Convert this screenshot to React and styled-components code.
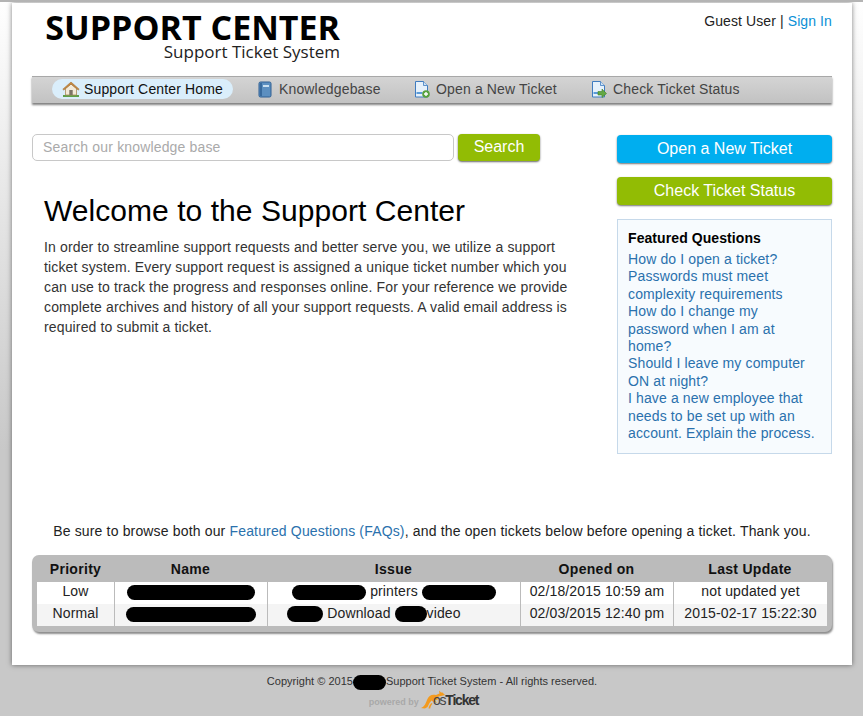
import React from "react";
import styled, { createGlobalStyle } from "styled-components";

const Global = createGlobalStyle`
  html, body { margin: 0; padding: 0; height: 716px; overflow: hidden; }
  body {
    background: linear-gradient(to bottom, #ffffff 0, #c8c8c8 450px, #c8c8c8 100%);
    font-family: "Liberation Sans", Arial, sans-serif;
    font-size: 14px;
    color: #000;
    border-top: 2px solid #b4b4b4;
    box-sizing: border-box;
  }
`;
const Page = styled.div`
  display: flex; flex-direction: column; align-items: center; padding-left: 1px;
`;
const Container = styled.div`
  box-sizing: border-box;
  margin-top: 1px;
  width: 840px; height: 662px;
  background: #fff;
  box-shadow: 0 0 5px rgba(0,0,0,.5);
  padding: 0 20px;
  display: flex; flex-direction: column;
`;
const Header = styled.header`
  display: flex; justify-content: space-between; align-items: flex-start;
  height: 73px; padding-left: 13px;
`;
const Logo = styled.div`
  display: flex; flex-direction: column; align-items: flex-end;
  font-family: "Open Sans", sans-serif; color: #000; width: 295px; padding-top: 8px;
`;
const LogoMain = styled.div`
  font-size: 34px; font-weight: 700; line-height: 32px; white-space: nowrap;
`;
const LogoSub = styled.div`
  font-size: 17px; line-height: 18px; color: #222; margin-top: 0; white-space: nowrap;
`;
const UserBar = styled.div`
  padding-top: 10px; font-size: 14px; line-height: 17px; color: #222; letter-spacing: .1px;
`;
const Link = styled.a`
  color: ${p => p.$c || "#0a8fd6"}; text-decoration: none;
`;
const Nav = styled.nav`
  box-sizing: border-box;
  height: 27px;
  border-top: 1px solid #a8a8a8;
  background: linear-gradient(to bottom, #d4d4d4, #c2c2c2);
  box-shadow: 0 2px 2px rgba(0,0,0,.5);
  display: flex; align-items: flex-start;
  padding: 2px 0 0 20px;
`;
const NavItem = styled.a`
  display: flex; align-items: center; gap: ${p => p.$gap}px;
  height: 20px; box-sizing: border-box;
  width: ${p => p.$w}px;
  padding-left: 10px;
  border-radius: 10px;
  margin-right: ${p => p.$mr || 0}px;
  background: ${p => p.$active ? "#daeefb" : "transparent"};
  color: ${p => p.$active ? "#111" : "#444"};
  font-size: 14px; white-space: nowrap; letter-spacing: .15px;
`;
const Main = styled.div`
  display: flex; justify-content: space-between; height: 387px; margin-top: 31px;
`;
const LeftCol = styled.div`
  width: 540px;
`;
const SearchRow = styled.form`
  display: flex; gap: 4px; height: 27px; margin: 0;
`;
const SearchInput = styled.div`
  box-sizing: border-box; width: 422px; height: 27px;
  border: 1px solid #c8c8c8; border-radius: 5px; background: #fff;
  color: #aaa; font-size: 14px; line-height: 25px; padding-left: 10px; letter-spacing: .16px;
`;
const SearchButton = styled.div`
  width: 82px; height: 27px; border-radius: 4px; background: #92bc04;
  box-shadow: 0 1px 2px rgba(0,0,0,.6);
  color: #fff; font-size: 16px; line-height: 26px; text-align: center;
`;
const Welcome = styled.div`
  padding: 33px 0 0 12px;
`;
const H1 = styled.h1`
  margin: 0 0 9px; font-size: 30px; font-weight: 400; line-height: 34px; color: #000; letter-spacing: .05px;
`;
const Para = styled.p`
  margin: 0; font-size: 14px; line-height: 20px; color: #333; width: 530px; letter-spacing: .14px;
`;
const Side = styled.aside`
  width: 215px; padding-top: 1px; display: flex; flex-direction: column;
`;
const CTA = styled.div`
  height: 28px; border-radius: 4px; background: ${p => p.$bg};
  box-shadow: 0 1px 2px rgba(0,0,0,.55);
  color: #fff; font-size: 16px; line-height: 27px; text-align: center;
  margin-bottom: 14px;
`;
const FAQ = styled.div`
  box-sizing: border-box; height: 235px;
  background: #f7fbfe; border: 1px solid #c6d9ea;
  padding: 10px 10px 0;
  font-size: 14px; line-height: 17.4px;
`;
const FAQTitle = styled.div`
  font-weight: 700; color: #000; margin-bottom: 4px; letter-spacing: .08px; line-height: 17px;
`;
const FAQLink = styled.a`
  display: block; color: #2a71ad; letter-spacing: .13px;
`;
const Notice = styled.p`
  margin: 0; text-align: center; font-size: 14px; line-height: 20px; color: #222; height: 20px;
  letter-spacing: .16px;
`;
const TableWrap = styled.div`
  margin-top: 14px; height: 77px; box-sizing: border-box;
  background: #bbb; border-radius: 7px; padding: 0 5px 6px;
  box-shadow: 1px 2px 2px rgba(0,0,0,.45);
`;
const Table = styled.table`
  border-collapse: separate; border-spacing: 0; table-layout: fixed; width: 790px; height: 71px;
  font-size: 14px; text-align: center; color: #222; letter-spacing: .12px;
`;
const Th = styled.th`
  height: 27px; padding: 0; font-size: 14px; font-weight: 700; color: #111; letter-spacing: .3px;
  width: ${p => p.$w}px;
`;
const Td = styled.td`
  box-sizing: border-box;
  height: 22px; padding: 0 0 4px; white-space: nowrap;
  border-left: ${p => p.$first ? "none" : "1px solid #bbb"};
  background: ${p => p.$alt ? "#f4f4f4" : "#fff"};
  line-height: 18px;
`;
const Shifted = styled.span`
  display: inline-block; margin-right: 40px;
`;
const Redact = styled.span`
  display: inline-block; vertical-align: middle; width: ${p => p.$w}px; height: ${p => p.$h || 15}px;
  background: #000; border-radius: 10px;
`;
const Footer = styled.footer`
  text-align: center; padding-top: 8px; font-size: 11px; line-height: 16px; color: #333; letter-spacing: .02px;
`;
const Powered = styled.div`
  display: flex; justify-content: center; align-items: flex-end; height: 19px; padding-right: 17px;
`;
const PoweredBy = styled.span`
  color: #a9a9a9; font-size: 9px; font-weight: 700; line-height: 14px; margin-right: 1px;
`;
const OsText = styled.span`
  font-size: 14px; font-weight: 700; line-height: 15px; color: #333; letter-spacing: -1.2px;
  margin-left: -13px; margin-bottom: 1px;
`;
const OsThin = styled.span`
  font-weight: 400; color: #444;
`;

const House = () => (
  <svg width="18" height="16" viewBox="0 0 18 16">
    <path d="M1 15h16" stroke="#5ea04a" strokeWidth="2" />
    <path d="M3.500 7.500V14h11V7.500L9 3z" fill="#f3ead8" stroke="#a98a5c" strokeWidth=".8" />
    <path d="M.8 8.200 9 1l8.200 7.200-1 .9L9 3 1.800 9.100z" fill="#c98a3e" stroke="#98642a" strokeWidth=".5" />
    <rect x="7.300" y="9" width="3.400" height="5" fill="#7d7468" />
  </svg>
);
const Book = () => (
  <svg width="16" height="17" viewBox="0 0 16 17">
    <rect x="2" y="1" width="12" height="15" rx="1.500" fill="#5c8fc0" stroke="#2f5f93" />
    <rect x="3" y="2" width="2" height="13" fill="#386a9d" />
    <rect x="6" y="4" width="6" height="2" fill="#c9dff0" />
  </svg>
);
const Doc = ({ kind }) => (
  <svg width="16" height="17" viewBox="0 0 16 17">
    <path d="M1.500.5h8l4 4v11.500h-12z" fill="#e6f1fb" stroke="#3f7cc0" />
    <path d="M9.500.5v4h4" fill="#cfe2f4" stroke="#3f7cc0" strokeWidth=".8" />
    <rect x="2.500" y="11" width="6" height="2" fill="#5b9bd8" />
    {kind === "plus" ? (
      <>
        <circle cx="12" cy="13" r="3.800" fill="#58a23e" />
        <path d="M12 11v4M10 13h4" stroke="#fff" strokeWidth="1.400" />
      </>
    ) : (
      <path d="M7 10.500h4V8l4.500 4.500L11 16.500V14H7z" fill="#63a844" stroke="#3f7f2a" strokeWidth=".6" />
    )}
  </svg>
);
const Kangaroo = () => (
  <svg width="26" height="20" viewBox="0 0 26 20">
    <path d="M0.500 19C4 18.500 5.500 15 7 11 8.500 6.500 12 5 16 6L19.500 4.500 19 1.500 21 3.500 22.500 3.500 25 6 21 7 18.500 7.500 17.500 10.500 15 11.500 17 14 13.500 13 11.500 11.500 9.500 14 7.500 18 5 19.500z" fill="#f39a1e" />
    <path d="M8.500 19.500c.3-2 1.500-4 2.800-5.500l1.200.8c-1.300 1.300-2 3-2.300 4.700z" fill="#f39a1e" />
  </svg>
);

const Row = ({ alt, cells }) => (
  <tr>
    {cells.map((c, i) => (
      <Td key={i} $alt={alt} $first={i === 0}>{c}</Td>
    ))}
  </tr>
);

export default function App() {
  return (
    <Page>
      <Global />
      <Container>
        <Header>
          <Logo>
            <LogoMain>SUPPORT CENTER</LogoMain>
            <LogoSub>Support Ticket System</LogoSub>
          </Logo>
          <UserBar>Guest User | <Link>Sign In</Link></UserBar>
        </Header>
        <Nav>
          <NavItem $active $w={181} $mr={14} $gap={4}><House />Support Center Home</NavItem>
          <NavItem $w={157} $gap={6}><Book />Knowledgebase</NavItem>
          <NavItem $w={177} $gap={6}><Doc kind="plus" />Open a New Ticket</NavItem>
          <NavItem $w={190} $gap={6}><Doc kind="arrow" />Check Ticket Status</NavItem>
        </Nav>
        <Main>
          <LeftCol>
            <SearchRow>
              <SearchInput>Search our knowledge base</SearchInput>
              <SearchButton>Search</SearchButton>
            </SearchRow>
            <Welcome>
              <H1>Welcome to the Support Center</H1>
              <Para>
                In order to streamline support requests and better serve you, we utilize a support
                ticket system. Every support request is assigned a unique ticket number which you
                can use to track the progress and responses online. For your reference we provide
                complete archives and history of all your support requests. A valid email address is
                required to submit a ticket.
              </Para>
            </Welcome>
          </LeftCol>
          <Side>
            <CTA $bg="#00aeef">Open a New Ticket</CTA>
            <CTA $bg="#92bc04">Check Ticket Status</CTA>
            <FAQ>
              <FAQTitle>Featured Questions</FAQTitle>
              <FAQLink>How do I open a ticket?</FAQLink>
              <FAQLink>Passwords must meet complexity requirements</FAQLink>
              <FAQLink>How do I change my password when I am at home?</FAQLink>
              <FAQLink>Should I leave my computer ON at night?</FAQLink>
              <FAQLink>I have a new employee that needs to be set up with an account. Explain the process.</FAQLink>
            </FAQ>
          </Side>
        </Main>
        <Notice>
          Be sure to browse both our <Link $c="#2a71ad">Featured Questions (FAQs)</Link>, and the open tickets below before opening a ticket. Thank you.
        </Notice>
        <TableWrap>
          <Table>
            <thead>
              <tr>
                <Th $w={77}>Priority</Th>
                <Th $w={153}>Name</Th>
                <Th $w={253}>Issue</Th>
                <Th $w={153}>Opened on</Th>
                <Th $w={154}>Last Update</Th>
              </tr>
            </thead>
            <tbody>
              <Row cells={[
                "Low",
                <Redact $w={128} />,
                <><Redact $w={74} /> printers <Redact $w={74} /></>,
                "02/18/2015 10:59 am",
                "not updated yet",
              ]} />
              <Row alt cells={[
                "Normal",
                <Redact $w={130} />,
                <Shifted><Redact $w={36} $h={16} /> Download <Redact $w={32} $h={16} />video</Shifted>,
                "02/03/2015 12:40 pm",
                "2015-02-17 15:22:30",
              ]} />
            </tbody>
          </Table>
        </TableWrap>
      </Container>
      <Footer>
        Copyright © 2015<Redact $w={33} />Support Ticket System - All rights reserved.
        <Powered>
          <PoweredBy>powered by</PoweredBy>
          <Kangaroo />
          <OsText><OsThin>os</OsThin>Ticket</OsText>
        </Powered>
      </Footer>
    </Page>
  );
}
